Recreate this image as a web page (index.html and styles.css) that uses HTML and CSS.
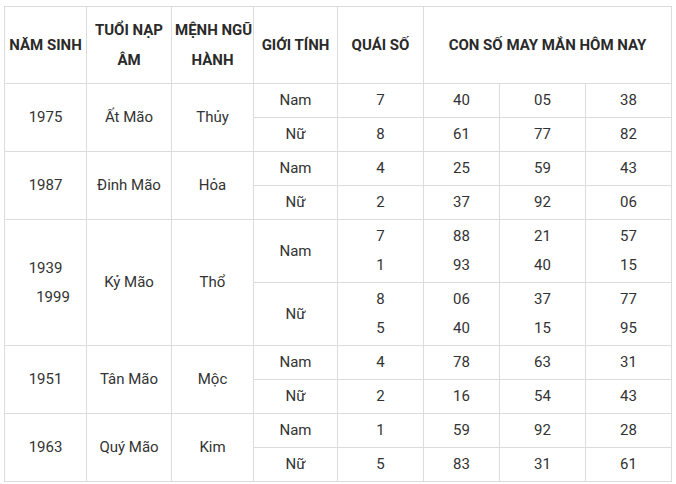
FILE: index.html
```html
<!DOCTYPE html>
<html lang="vi">
<head>
<meta charset="utf-8">
<link rel="stylesheet" href="styles.css">
</head>
<body>
<table class="lucky">
  <colgroup>
    <col class="c1"><col class="c2"><col class="c3"><col class="c4"><col class="c5"><col class="c6"><col class="c7"><col class="c8">
  </colgroup>
  <thead>
    <tr>
      <th>NĂM SINH</th>
      <th>TUỔI NẠP<br>ÂM</th>
      <th>MỆNH NGŨ<br>HÀNH</th>
      <th>GIỚI TÍNH</th>
      <th>QUÁI SỐ</th>
      <th colspan="3">CON SỐ MAY MẮN HÔM NAY</th>
    </tr>
  </thead>
  <tbody>
    <tr><td rowspan="2">1975</td><td rowspan="2">Ất Mão</td><td rowspan="2">Thủy</td><td>Nam</td><td>7</td><td>40</td><td>05</td><td>38</td></tr>
    <tr><td>Nữ</td><td>8</td><td>61</td><td>77</td><td>82</td></tr>
    <tr><td rowspan="2">1987</td><td rowspan="2">Đinh Mão</td><td rowspan="2">Hỏa</td><td>Nam</td><td>4</td><td>25</td><td>59</td><td>43</td></tr>
    <tr><td>Nữ</td><td>2</td><td>37</td><td>92</td><td>06</td></tr>
    <tr><td rowspan="2">1939<br><span class="shift">1999</span></td><td rowspan="2">Kỷ Mão</td><td rowspan="2">Thổ</td><td>Nam</td><td>7<br>1</td><td>88<br>93</td><td>21<br>40</td><td>57<br>15</td></tr>
    <tr><td>Nữ</td><td>8<br>5</td><td>06<br>40</td><td>37<br>15</td><td>77<br>95</td></tr>
    <tr><td rowspan="2">1951</td><td rowspan="2">Tân Mão</td><td rowspan="2">Mộc</td><td>Nam</td><td>4</td><td>78</td><td>63</td><td>31</td></tr>
    <tr><td>Nữ</td><td>2</td><td>16</td><td>54</td><td>43</td></tr>
    <tr><td rowspan="2">1963</td><td rowspan="2">Quý Mão</td><td rowspan="2">Kim</td><td>Nam</td><td>1</td><td>59</td><td>92</td><td>28</td></tr>
    <tr><td>Nữ</td><td>5</td><td>83</td><td>31</td><td>61</td></tr>
  </tbody>
</table>
</body>
</html>
```
FILE: styles.css
```css
html, body {
  margin: 0;
  background: #fff;
}
body {
  padding: 6px 4px 0 4px;
  font-family: Roboto, "Liberation Sans", sans-serif;
  font-size: 15px;
  color: #333;
}
.lucky {
  border-collapse: collapse;
  table-layout: fixed;
  width: 668px;
}
.c1 { width: 82px; }
.c2 { width: 85px; }
.c3 { width: 82px; }
.c4 { width: 84px; }
.c5 { width: 86px; }
.c6 { width: 76px; }
.c7 { width: 86px; }
.c8 { width: 86px; }
.lucky th,
.lucky td {
  border: 1px solid #dcdcdc;
  text-align: center;
  vertical-align: middle;
  white-space: nowrap;
  padding: 2px 3px;
  line-height: 29px;
}
.lucky th {
  font-weight: 700;
  color: #2a2a2a;
  padding: 8px 3px;
  line-height: 30px;
}
.shift {
  display: inline-block;
  padding-left: 15px;
}
```
